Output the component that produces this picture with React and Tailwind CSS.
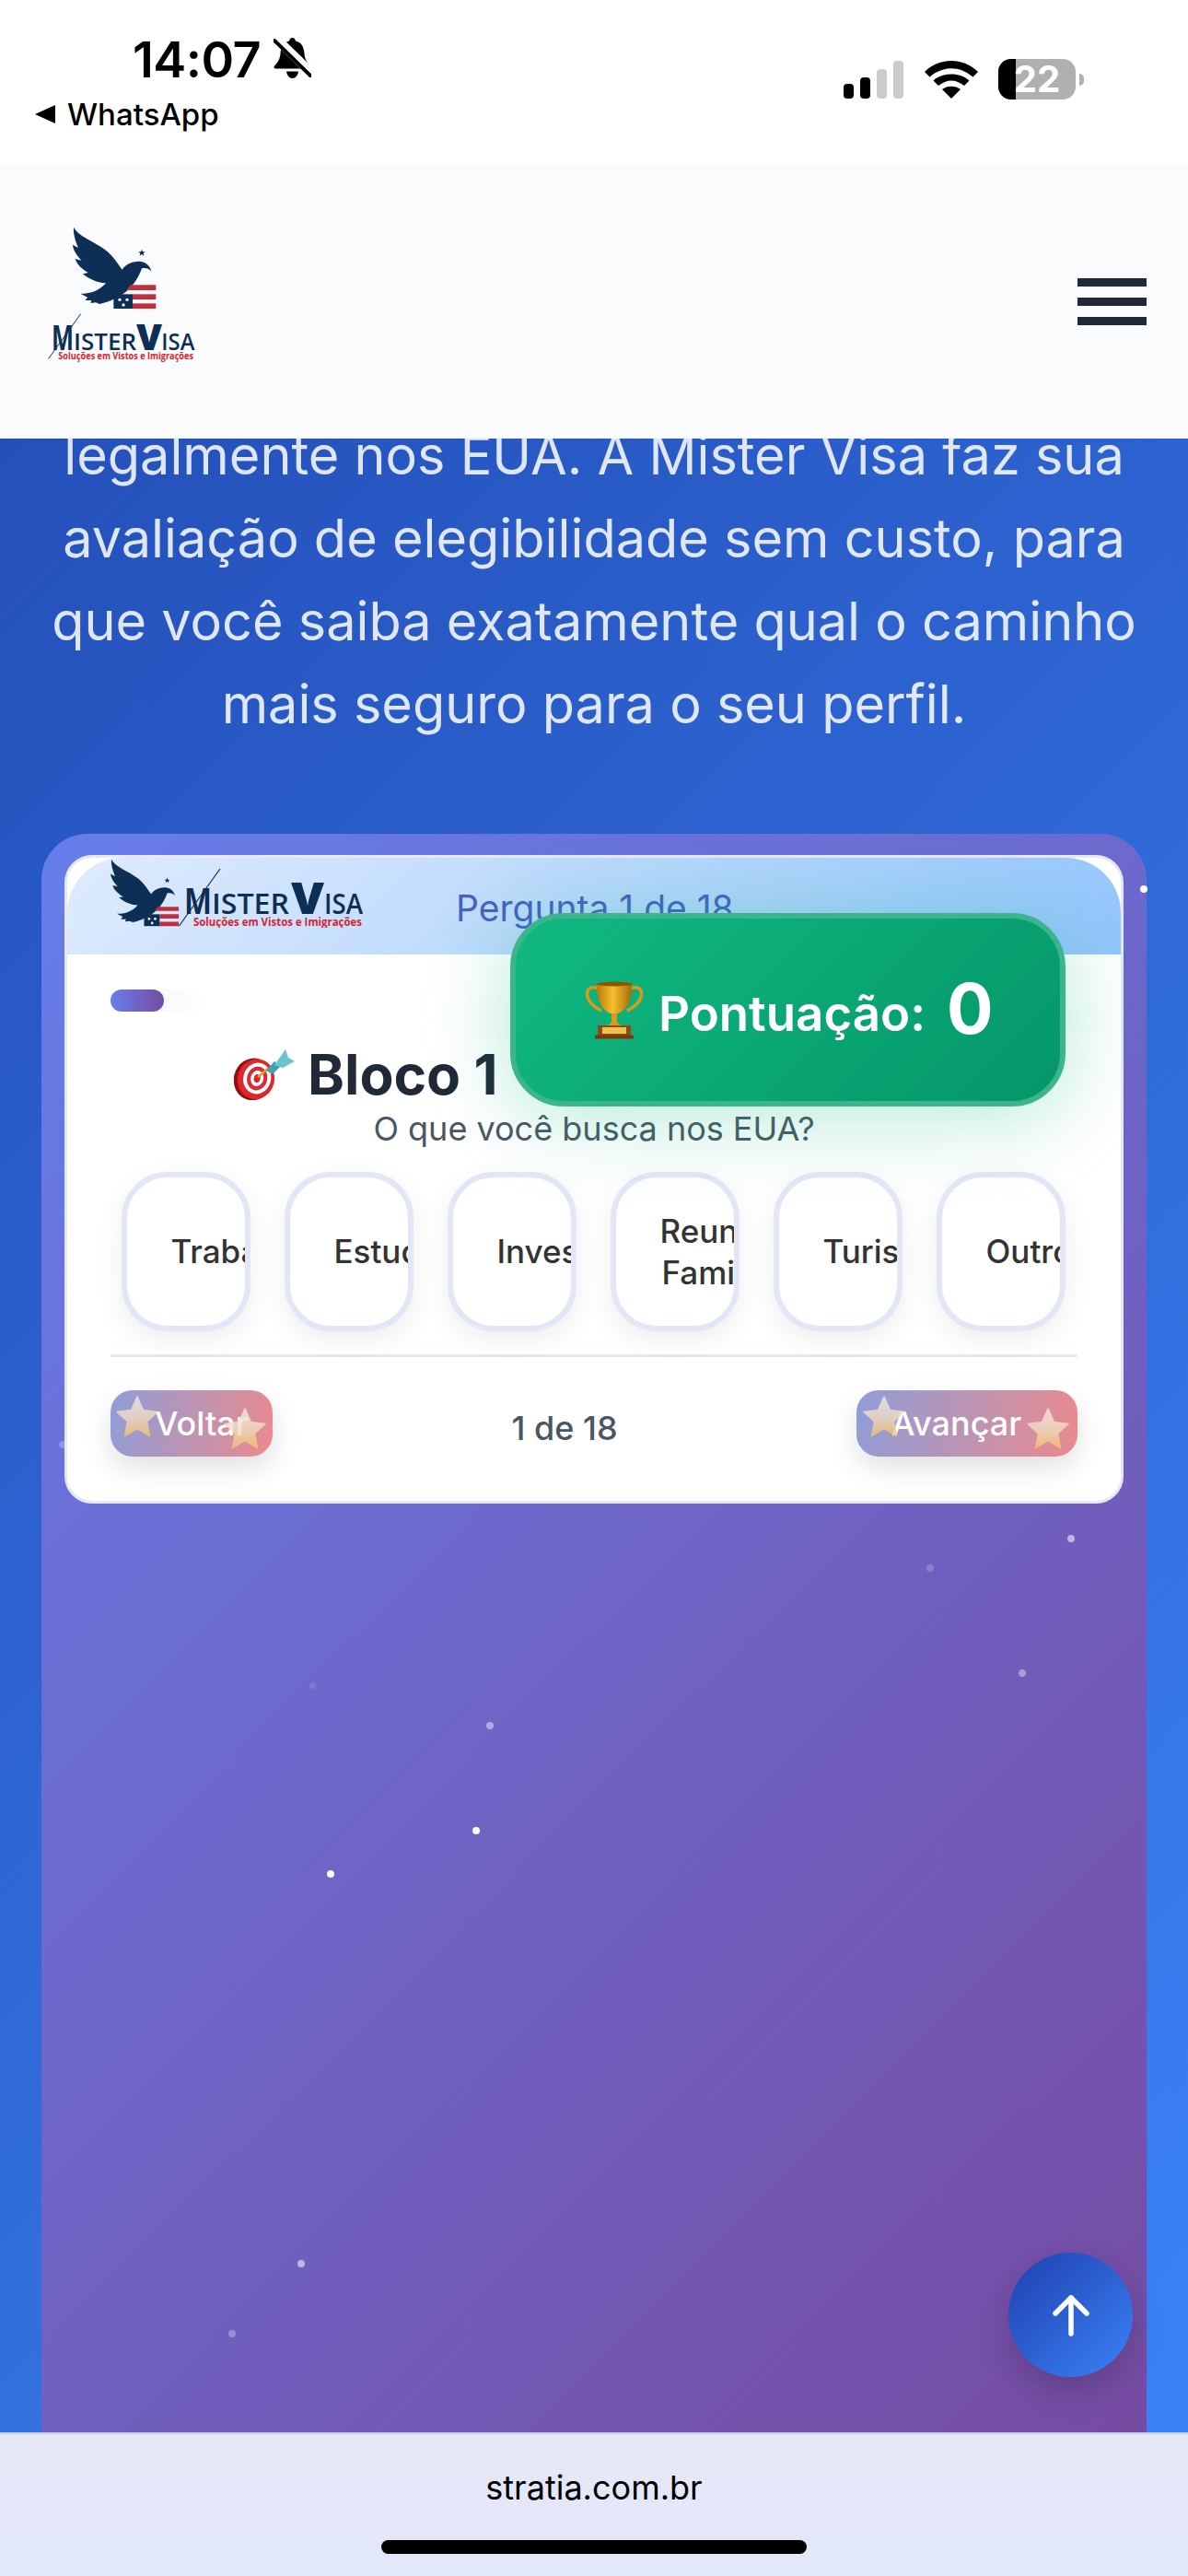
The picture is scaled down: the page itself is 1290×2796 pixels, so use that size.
import React from "react";

function BellSlash() {
  return (
    <svg width="41" height="44" viewBox="0 0 41 44" className="ml-[14px] mt-[-4px]">
      <path d="M20.5 0c-2 0-3 1.5-3.5 3.5C10.5 5 8 10 7.500 17c-.4 6-3 10-6.500 13.500-1 1-.5 3 1.500 3h36c2 0 2.500-2 1.500-3-3.500-3.500-6.100-7.500-6.500-13.500C33 10 30.500 5 24 3.500 23.500 1.500 22.500 0 20.500 0z" fill="#000" />
      <path d="M14 36.500h13c-.5 4-3 7.500-6.500 7.500s-6-3.500-6.500-7.500z" fill="#000" />
      <line x1="2" y1="0" x2="42" y2="39" stroke="#fff" strokeWidth="10" />
      <line x1="1" y1="3" x2="40" y2="41" stroke="#000" strokeWidth="4" strokeLinecap="round" />
    </svg>
  );
}

function Wifi() {
  return (
    <svg width="58" height="41" viewBox="0 0 58 41">
      <path d="M0 12C16-4 42-4 58 12l-5.500 5.500C38 5 20 5 5.500 17.500z" fill="#000" />
      <path d="M9.500 21.500C19 12 39 12 48.500 21.500L43 27C34 19.500 24 19.500 15 27z" fill="#000" />
      <path d="M19 31c5-4.500 15-4.500 20 0L29 41z" fill="#000" />
    </svg>
  );
}

function EagleMark({ fill = "#0e2f55" }) {
  return (
    <g>
      <path
        fill={fill}
        d="M150 80C165 110 215 125 255 155C280 175 295 200 308 218C320 200 345 188 370 192C388 195 400 208 403 224C395 214 385 212 372 214C365 235 350 262 330 282C305 305 270 322 235 330L222 325L205 327L208 318L188 318L195 308L172 296C205 298 235 285 255 262C225 262 195 245 180 232L197 228C175 215 160 200 155 183L175 188C160 170 148 155 147 137L165 147C155 125 148 100 150 80Z"
      />
      <path fill={fill} d="M372 152l3 8 8 0-6 5 2 8-7-5-7 5 2-8-6-5 8 0z" />
      <path fill="#c02f3e" d="M335 268H418V285H322z" />
      <path fill="#c02f3e" d="M342 298H418V315H342z" />
      <path fill="#c02f3e" d="M342 328H418V345H342z" />
      <rect x="280" y="298" width="62" height="47" fill={fill} />
      <circle cx="300" cy="316" r="5" fill="#fff" />
      <circle cx="324" cy="316" r="5" fill="#fff" />
      <circle cx="312" cy="333" r="5" fill="#fff" />
    </g>
  );
}

function WordMark() {
  return (
    <g fontFamily="'Open Sans','Inter',sans-serif">
      <line x1="173" y1="362" x2="68" y2="508" stroke="#0e2f55" strokeWidth="3" />
      <text x="78" y="480" fontSize="110" fontWeight="700" fill="#0e2f55" textLength="72" lengthAdjust="spacingAndGlyphs">M</text>
      <text x="150" y="480" fontSize="78" fontWeight="600" fill="#0e2f55" textLength="204" lengthAdjust="spacingAndGlyphs">ISTER</text>
      <text x="354" y="480" fontSize="118" fontWeight="800" fill="#0e2f55" textLength="84" lengthAdjust="spacingAndGlyphs">V</text>
      <text x="436" y="480" fontSize="78" fontWeight="600" fill="#0e2f55" textLength="108" lengthAdjust="spacingAndGlyphs">ISA</text>
      <text x="100" y="510" fontSize="32" fontWeight="700" fill="#d8232f" textLength="440" lengthAdjust="spacingAndGlyphs">Soluções em Vistos e Imigrações</text>
    </g>
  );
}

function TopLogo() {
  return (
    <svg width="170" height="160" viewBox="60 60 510 480" className="shrink-0">
      <EagleMark />
      <WordMark />
    </svg>
  );
}

function CardLogo() {
  return (
    <svg width="274" height="74" viewBox="0 0 274 74" className="shrink-0">
      <g transform="translate(-40 -22) scale(0.273)">
        <EagleMark />
      </g>
      <line x1="119" y1="10" x2="74.500" y2="72" stroke="#0e2f55" strokeWidth="1.200" />
      <g fontFamily="'Open Sans','Inter',sans-serif">
        <text x="80" y="59" fontSize="40" fontWeight="700" fill="#0e2f55" textLength="30" lengthAdjust="spacingAndGlyphs">M</text>
        <text x="110" y="59" fontSize="30" fontWeight="600" fill="#0e2f55" textLength="84" lengthAdjust="spacingAndGlyphs">ISTER</text>
        <text x="196" y="59" fontSize="48" fontWeight="800" fill="#0e2f55" textLength="36" lengthAdjust="spacingAndGlyphs">V</text>
        <text x="232" y="59" fontSize="30" fontWeight="600" fill="#0e2f55" textLength="42" lengthAdjust="spacingAndGlyphs">ISA</text>
        <text x="90" y="72" fontSize="13" fontWeight="700" fill="#d8232f" textLength="183" lengthAdjust="spacingAndGlyphs">Soluções em Vistos e Imigrações</text>
      </g>
    </svg>
  );
}

function Trophy() {
  return (
    <svg width="62" height="63" viewBox="0 0 62 63" className="shrink-0">
      <defs>
        <linearGradient id="cup" x1="0" x2="1" y1="0" y2="0">
          <stop offset="0" stopColor="#b87708" />
          <stop offset="0.45" stopColor="#f5c02c" />
          <stop offset="1" stopColor="#a86a05" />
        </linearGradient>
      </defs>
      <path d="M14 8C4 4 0 10 2 17c2 8 9 12 15 15" fill="none" stroke="#d99a18" strokeWidth="3.500" />
      <path d="M48 8c10-4 14 2 12 9-2 8-9 12-15 15" fill="none" stroke="#d99a18" strokeWidth="3.500" />
      <path d="M12 2h38c0 14-2 28-15 33h-8C14 30 12 16 12 2z" fill="url(#cup)" />
      <ellipse cx="31" cy="3" rx="19" ry="2.500" fill="#8a5606" />
      <path d="M28 35h6v8c0 2 2 4 5 5H23c3-1 5-3 5-5z" fill="#d99a18" />
      <rect x="13" y="48" width="36" height="11" fill="#8f4a12" />
      <rect x="18" y="50" width="26" height="7" fill="#f0c14c" />
      <rect x="10" y="58.500" width="42" height="4" rx="1" fill="#7a3a0c" />
    </svg>
  );
}

function Dart() {
  return (
    <svg width="66" height="56" viewBox="0 0 66 56" className="shrink-0">
      <g transform="rotate(14 23 33)">
        <ellipse cx="21" cy="34" rx="21" ry="23" fill="#8f1016" />
        <ellipse cx="24" cy="33" rx="20" ry="22" fill="#e0262c" />
        <ellipse cx="25" cy="32" rx="15" ry="17" fill="#fff" />
        <ellipse cx="25" cy="32" rx="11" ry="13" fill="#dd2a30" />
        <ellipse cx="25" cy="32" rx="7" ry="8.500" fill="#fff" />
        <ellipse cx="25" cy="32" rx="3.500" ry="4.500" fill="#d5252b" />
      </g>
      <line x1="26" y1="31" x2="38" y2="21" stroke="#d8a13a" strokeWidth="2.500" />
      <path d="M35 24l9-10 7 5-9 9z" fill="#3f9fb3" />
      <path d="M44 18L56 1l3 9 7 4-13 7z" fill="#6cc3d0" />
    </svg>
  );
}

function Star({ className }) {
  return (
    <svg width="46" height="46" viewBox="0 0 46 46" className={`absolute opacity-80 blur-[0.7px] ${className}`}>
      <defs>
        <linearGradient id="starfill" x1="0" x2="0" y1="0" y2="1">
          <stop offset="0" stopColor="#f1ece6" />
          <stop offset="0.55" stopColor="#f1dcc0" />
          <stop offset="1" stopColor="#f2c469" />
        </linearGradient>
      </defs>
      <path
        d="M23 2l6.500 14.500 15.500 2-11.500 10.500 3 15.500L23 36.500 9.500 44.500l3-15.500L1 18.500l15.500-2z"
        fill="url(#starfill)"
        stroke="url(#starfill)"
        strokeWidth="1.500"
        strokeLinejoin="round"
      />
    </svg>
  );
}

const OPTIONS = ["Trabalho", "Estudo", "Investimento", "Reunião Familiar", "Turismo", "Outro"];

const DOTS = [
  { l: 1193, t: 56, s: 8, o: 1 },
  { l: 1114, t: 761, s: 8, o: 0.55 },
  { l: 961, t: 793, s: 8, o: 0.2 },
  { l: 1061, t: 907, s: 8, o: 0.4 },
  { l: 483, t: 964, s: 8, o: 0.45 },
  { l: 468, t: 1078, s: 8, o: 1 },
  { l: 310, t: 1125, s: 8, o: 1 },
  { l: 278, t: 1548, s: 8, o: 0.55 },
  { l: 203, t: 1624, s: 8, o: 0.3 },
  { l: 291, t: 921, s: 7, o: 0.12 },
  { l: 19, t: 659, s: 8, o: 0.25 },
];

export default function App() {
  return (
    <div className="relative flex h-[2796px] w-[1290px] flex-col overflow-hidden bg-white font-['Inter',sans-serif]">
      {/* status bar */}
      <div className="flex h-[178px] shrink-0 justify-between bg-white">
        <div className="flex flex-col pl-[38px]">
          <div className="ml-[106px] mt-[35px] flex h-[60px] items-center">
            <span className="text-[54px] font-semibold leading-[60px] tracking-[-0.5px] text-black">14:07</span>
            <BellSlash />
          </div>
          <div className="mt-[9px] flex items-center">
            <svg width="22" height="20" viewBox="0 0 22 20">
              <path d="M22 0v20L0 10z" fill="#000" />
            </svg>
            <span className="ml-[13px] text-[33px] font-medium leading-[40px] text-black">WhatsApp</span>
          </div>
        </div>
        <div className="flex items-start pr-[113px] pt-[64px]">
          <div className="mt-[2px] flex h-[41px] items-end gap-[7px]">
            <div className="h-[16px] w-[11px] rounded-[4px] bg-black" />
            <div className="h-[23px] w-[11px] rounded-[4px] bg-black" />
            <div className="h-[32px] w-[11px] rounded-[4px] bg-[#cbcbcb]" />
            <div className="h-[41px] w-[11px] rounded-[4px] bg-[#cbcbcb]" />
          </div>
          <div className="ml-[23px] mt-[2px]">
            <Wifi />
          </div>
          <div className="relative ml-[22px] flex h-[44px] w-[84px] overflow-hidden rounded-[14px] bg-[#b0b0b0]">
            <div className="h-full w-[19px] bg-black" />
            <span className="absolute inset-0 flex items-center justify-center text-[40px] font-bold leading-none text-white">22</span>
          </div>
          <div className="ml-[4px] mt-[16px] h-[13px] w-[5px] rounded-r-full bg-[#b0b0b0]" />
        </div>
      </div>

      {/* header */}
      <div className="z-10 flex h-[298px] shrink-0 items-start justify-between bg-[#fafbfd] pl-[50px] pr-[45px] pt-[62px]">
        <TopLogo />
        <div className="mt-[62px] flex w-[75px] flex-col gap-[12px]">
          <div className="h-[9px] bg-[#1f2937]" />
          <div className="h-[9px] bg-[#1f2937]" />
          <div className="h-[9px] bg-[#1f2937]" />
        </div>
      </div>

      {/* main */}
      <div className="relative flex min-h-0 flex-1 flex-col overflow-hidden bg-[linear-gradient(135deg,#2450ba,#3b82f6)]">
        <p className="mt-[-27px] text-center text-[57.6px] font-normal leading-[90px] text-white/85">
          legalmente nos EUA. A Mister Visa faz sua
          <br />
          avaliação de elegibilidade sem custo, para
          <br />
          que você saiba exatamente qual o caminho
          <br />
          mais seguro para o seu perfil.
        </p>

        <div className="relative mx-[45px] mt-[96px] min-h-0 flex-1 rounded-t-[50px] bg-[linear-gradient(135deg,#667eea,#764ba2)] px-[25px] pt-[23px]">
          {DOTS.map((d, i) => (
            <div
              key={i}
              className="absolute rounded-full bg-white"
              style={{ left: d.l, top: d.t, width: d.s, height: d.s, opacity: d.o }}
            />
          ))}

          {/* quiz card */}
          <div className="relative rounded-[30px] border-[3px] border-[#e6e8f5] bg-white">
            <div className="flex h-[105px] items-start overflow-hidden rounded-t-[60px] bg-[linear-gradient(135deg,#dfebfd,#93c5fd)] pl-[47px] pt-[2px]">
              <CardLogo />
              <span className="ml-[101px] mt-[30px] text-[39px] leading-[46px] text-[#4263c2]">Pergunta 1 de 18</span>
            </div>

            <div className="px-[47px] pb-[48px]">
              <div className="mt-[38px] h-[24px] w-[105px] rounded-full bg-[linear-gradient(90deg,#f0f2fc,#ffffff)]">
                <div className="h-full w-[58px] rounded-full bg-[linear-gradient(90deg,#667eea,#764ba2)]" />
              </div>

              <div className="ml-[134px] mt-[32px] flex h-[72px] items-center">
                <Dart />
                <span className="ml-[14px] text-[60.5px] font-bold leading-[72px] text-[#1f2937]">Bloco 1</span>
              </div>
              <p className="mt-[1px] text-center text-[36px] leading-[44px] text-[#4b5563]">O que você busca nos EUA?</p>

              <div className="mt-[25px] flex justify-center gap-[37px] pr-[2px]">
                {OPTIONS.map((o) => (
                  <div
                    key={o}
                    className="flex h-[173px] w-[140px] shrink-0 items-center overflow-hidden rounded-[50px] border-[6px] border-[#e2e7f8] bg-white pl-[48px] shadow-[0_10px_30px_rgba(0,0,0,0.07)]"
                  >
                    <span className="block w-min text-center text-[35px] font-medium leading-[45px] text-[#333333]">{o}</span>
                  </div>
                ))}
              </div>

              <div className="mt-[25px] h-[3px] bg-[#e4e8f8]" />

              <div className="mt-[36px] flex items-start justify-between">
                <button className="relative flex h-[72px] w-[176px] items-center rounded-[24px] bg-[linear-gradient(100deg,#8f9dd8,#ea8a8e)] pl-[48px] text-[36px] font-medium text-white shadow-[0_12px_30px_rgba(0,0,0,0.12)]">
                  Voltar
                  <Star className="left-[6px] top-[5px]" />
                  <Star className="left-[123px] top-[18px]" />
                </button>
                <span className="mt-[19px] text-[36px] font-medium leading-[44px] text-[#4b5563]">1 de 18</span>
                <button className="relative flex h-[72px] w-[240px] items-center rounded-[24px] bg-[linear-gradient(100deg,#8f9dd8,#ea8a8e)] pl-[38px] text-[36px] font-medium text-white shadow-[0_12px_30px_rgba(0,0,0,0.12)]">
                  Avançar
                  <Star className="left-[7px] top-[5px]" />
                  <Star className="left-[185px] top-[18px]" />
                </button>
              </div>
            </div>

            {/* score overlay */}
            <div className="absolute left-[481px] top-[60px] flex h-[210px] w-[603px] items-center rounded-[58px] border-[6px] border-[#3cb48c] bg-[linear-gradient(135deg,#10b981,#059669)] pl-[76px] shadow-[0_10px_90px_rgba(16,185,129,0.32)]">
              <Trophy />
              <span className="ml-[17px] mt-[8px] text-[52.8px] font-semibold leading-none text-white">Pontuação:</span>
              <span className="ml-[23px] mt-[-3px] text-[75px] font-bold leading-none text-white">0</span>
            </div>
          </div>
        </div>
      </div>

      {/* bottom bar */}
      <div className="relative z-10 flex h-[156px] shrink-0 flex-col items-center border-t-[2px] border-[#c9cde0] bg-[linear-gradient(180deg,#e6e7f6,#e2e8f9)]">
        <span className="mt-[36px] text-[36px] leading-[44px] text-black">stratia.com.br</span>
        <div className="mt-[35px] h-[15px] w-[462px] rounded-full bg-black" />
      </div>

      {/* scroll to top */}
      <button className="absolute left-[1095px] top-[2445px] z-20 flex h-[135px] w-[135px] items-center justify-center rounded-full bg-[linear-gradient(135deg,#1e40af,#3b82f6)] shadow-[0_14px_34px_rgba(0,0,0,0.18)]">
        <svg width="40" height="46" viewBox="0 0 40 46" fill="none" stroke="#fff" strokeWidth="5.500" strokeLinecap="round" strokeLinejoin="round">
          <path d="M20 43V4" />
          <path d="M3 21L20 4l17 17" />
        </svg>
      </button>
    </div>
  );
}
